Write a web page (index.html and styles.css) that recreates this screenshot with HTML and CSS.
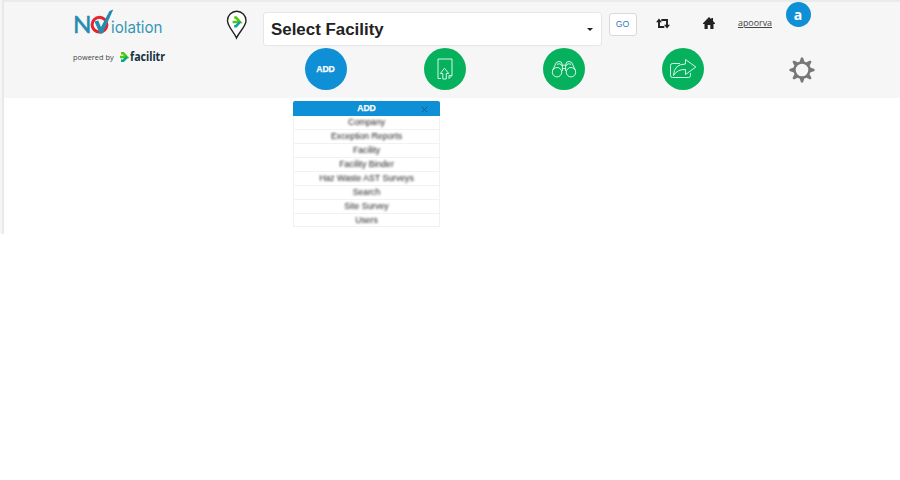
FILE: index.html
```html
<!DOCTYPE html>
<html lang="en">
<head>
<meta charset="utf-8">
<title>NoViolation</title>
<link rel="stylesheet" href="styles.css">
</head>
<body>
<div class="app">
  <header class="header">
    <div class="brand">
      <svg class="logo" width="92" height="30" viewBox="0 0 92 30">
        <text class="logo-n" x="-1" y="24" textLength="18.5" lengthAdjust="spacingAndGlyphs">N</text>
        <circle cx="25.5" cy="15.7" r="7.4" fill="none" stroke="#e8232a" stroke-width="3"/>
        <path d="M20.5 12.5L24.2 11.6L27 18L35.5 2L39.3 0.5L28.6 24.5L25.8 24.8Z" fill="#238cb0"/>
        <text class="logo-rest" x="37" y="24" textLength="51.5" lengthAdjust="spacingAndGlyphs">iolation</text>
      </svg>
      <div class="powered">
        <span class="powered-by">powered by</span>
        <svg class="arrow" width="9" height="10" viewBox="0 0 9 10" fill="none" stroke-width="2.6"><path d="M1 1.2H3.2L6.8 5H0" stroke="#55c516"/><path d="M1 8.8H3.2L7 5" stroke="#00a88c"/></svg>
        <svg class="wordmark" width="40" height="16" viewBox="0 0 40 16"><text class="facilitr" x="0" y="12" textLength="35" lengthAdjust="spacingAndGlyphs">facilitr</text></svg>
      </div>
    </div>
    <div class="panel">
      <div class="topbar">
        <svg class="pin" width="22" height="30" viewBox="0 0 22 30" fill="none">
          <path d="M10.5 28C8 22 1.5 16.5 1.5 10.5a9.2 9.2 0 0 1 18.5 0C20 16.5 13 22 10.5 28Z" fill="#fff" stroke="#222" stroke-width="1.4"/>
          <path d="M8.2 7.6H10L14 12H6.6" stroke="#55c516" stroke-width="2.5"/><path d="M8.2 16.2H10L14 12" stroke="#00a6a0" stroke-width="2.5"/>
        </svg>
        <div class="select"><span>Select Facility</span><i class="caret"></i></div>
        <button class="go">GO</button>
        <svg class="swap" width="14" height="11" viewBox="0 0 14 11">
          <path d="M3 3V9H8.3M5.3 2H11V7" fill="none" stroke="#222" stroke-width="1.9"/><path d="M0 4.3L3 .4L6 4.3ZM8 6.7H14L11 10.6Z" fill="#222"/>
        </svg>
        <svg class="home" width="12" height="12" viewBox="0 0 12 12" fill="#222"><path d="M6 0L8.3 2.3V1H10V4L12 6.2V7H10.5V12H7.3V8H4.7V12H1.5V7H0V6.2Z"/></svg>
        <a class="user">apoorva</a>
        <div class="avatar">a</div>
      </div>
      <nav class="tools">
        <div class="tool active">ADD</div>
        <div class="tool"><svg width="42" height="42" viewBox="0 0 42 42"><path d="M17 30.5H14V11H28V27.5L25 30.5M18.8 31V25.5H16.3L20.5 20.2L24.7 25.5H22.3V31ZM25 30.5V27.5H28"/></svg></div>
        <div class="tool"><svg width="42" height="42" viewBox="0 0 42 42"><circle cx="14" cy="24.2" r="4.7"/><circle cx="28" cy="24.2" r="4.7"/><path d="M9.6 22.3L13.3 14.5Q16 12.3 18.5 14.3L19.4 18V23M14 16.3Q17 14.3 19.4 18M32.4 22.3L28.7 14.5Q26 12.3 23.5 14.3L22.6 18V23M28 16.3Q25 14.3 22.6 18M19.4 17.2H22.6M19.3 20.5H22.7"/></svg></div>
        <div class="tool"><svg width="42" height="42" viewBox="0 0 42 42"><path d="M18 15.5H10.5Q8.5 15.5 8.5 17.5V27.5Q8.5 29.5 10.5 29.5H26.5Q28.5 29.5 28.5 27.5V25M11.5 27.5Q12 16 23.5 16V11.5L33.8 19L23.5 26.5V21.5Q15.5 21 11.5 27.5Z"/></svg></div>
        <svg class="gear" width="26" height="26" viewBox="-13 -13 26 26">
          <circle r="7.5" fill="none" stroke="#777" stroke-width="2.4"/>
          <g fill="#777"><path id="tooth" d="M-2.5-8L-1-12.5H1L2.5-8Z"/><use href="#tooth" transform="rotate(45)"/><use href="#tooth" transform="rotate(90)"/><use href="#tooth" transform="rotate(135)"/><use href="#tooth" transform="rotate(180)"/><use href="#tooth" transform="rotate(225)"/><use href="#tooth" transform="rotate(270)"/><use href="#tooth" transform="rotate(315)"/></g>
        </svg>
      </nav>
    </div>
  </header>
  <section class="menu">
    <div class="menu-head">ADD<svg class="close" width="7" height="7" viewBox="0 0 7 7"><path d="M.7.7L6.3 6.3M6.3.7L.7 6.3" stroke="#18618f" stroke-width="1"/></svg></div>
    <ul class="menu-list">
      <li><span>Company</span></li>
      <li><span>Exception Reports</span></li>
      <li><span>Facility</span></li>
      <li><span>Facility Binder</span></li>
      <li><span>Haz Waste AST Surveys</span></li>
      <li><span>Search</span></li>
      <li><span>Site Survey</span></li>
      <li><span>Users</span></li>
    </ul>
  </section>
</div>
</body>
</html>
```
FILE: styles.css
```css
* { box-sizing: border-box; }
body { margin: 0; background: #fff; font-family: "Liberation Sans", Arial, sans-serif; }
.app { height: 234px; padding-left: 4px; background: linear-gradient(to right, #f5f5f5 2px, #e9e9e9 2px, #e9e9e9 4px, #fff 4px); }
.header { display: flex; height: 98px; background: #f6f6f6; border-top: 2px solid #ebebeb; }
.brand { width: 222px; padding: 7px 0 0 70px; }
.logo { display: block; overflow: visible; }
.logo-n { font: 24px Lato, sans-serif; fill: #238cb0; stroke: #238cb0; stroke-width: .5px; }
.logo-rest { font: 16.5px Inter, sans-serif; fill: #3597b7; }
.powered { display: flex; align-items: center; height: 14px; margin-top: 11px; }
.powered-by { width: 47px; margin-left: -1px; font: 7.4px "Open Sans", sans-serif; color: #444; white-space: nowrap; }
.arrow { margin-right: 1px; }
.wordmark { overflow: visible; }
.facilitr { font: bold 11.5px "Noto Sans", sans-serif; fill: #173040; }
.panel { flex: 1; }
.topbar { display: flex; align-items: flex-start; height: 46px; }
.pin { margin-top: 7.5px; }
.select { display: flex; align-items: center; justify-content: space-between; width: 339px; height: 34px; margin: 10px 0 0 15px; padding: 1px 8px 0 7px; background: #fff; border: 1px solid #e6e6e6; border-radius: 3px; font-size: 16.9px; font-weight: bold; color: #222; }
.caret { border: 3.5px solid transparent; border-top-color: #222; border-bottom: 0; }
.go { width: 28px; height: 23px; margin: 11px 0 0 6.5px; padding: 0 0 2px; background: #fff; border: 1px solid #d9d9d9; border-radius: 3px; font: 8.7px "Liberation Sans", sans-serif; color: #337ab7; }
.swap { margin: 16px 0 0 19.5px; }
.home { margin: 15px 0 0 33px; }
.user { width: 35px; margin: 15px 0 0 23px; font: 8.9px/12px "Open Sans", sans-serif; color: #444; text-decoration: underline; white-space: nowrap; }
.avatar { width: 25px; height: 25px; margin-left: 12.5px; border-radius: 50%; background: #0f8fd5; color: #fff; font: bold 14px/25px "Open Sans", sans-serif; text-align: center; }
.tools { display: flex; align-items: center; gap: 77px; height: 42px; padding-left: 78.5px; }
.tool { width: 42px; height: 42px; border-radius: 50%; background: #06b15d; }
.tool svg { display: block; fill: none; stroke: #e9fff3; stroke-width: .9; stroke-linejoin: round; }
.active { background: #0f8fd5; color: #fff; font: bold 8.6px/42px "Liberation Sans", sans-serif; -webkit-text-stroke: .25px #fff; text-align: center; }
.gear { margin: 2px 0 0 8.5px; }
.menu { width: 147px; margin: 3px 0 0 289px; }
.menu-head { position: relative; height: 15px; border-radius: 2px 2px 0 0; background: #0f8fd5; color: #fff; font: bold 8.6px/15px "Liberation Sans", sans-serif; -webkit-text-stroke: .25px #fff; text-align: center; }
.close { position: absolute; top: 5px; right: 12px; }
.menu-list { margin: 0; padding: 0; list-style: none; border: 1px solid #f1f1f1; border-top: 0; }
.menu-list li { height: 14px; border-bottom: 1px solid #f2f2f2; font-size: 8.7px; line-height: 12px; text-align: center; color: #222; }
.menu-list li:last-child { height: 12px; border-bottom: 0; }
.menu-list span { filter: blur(1.1px); display: inline-block; }
```
